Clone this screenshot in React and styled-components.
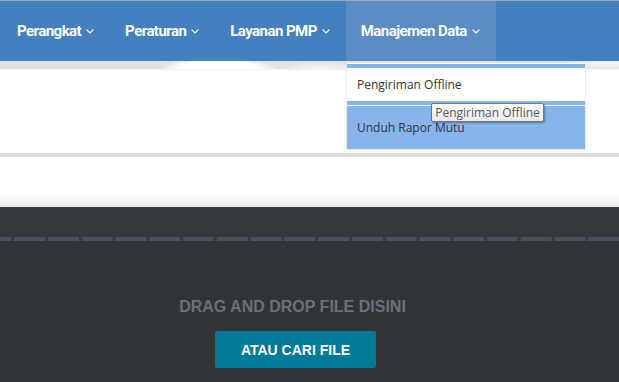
import React from "react";
import styled, { createGlobalStyle } from "styled-components";

const Global = createGlobalStyle`
  html, body { margin: 0; padding: 0; background: #fff; overflow: hidden; }
  body { font-family: "Open Sans", "Liberation Sans", sans-serif; }
`;

const Page = styled.div`
  width: 619px;
  height: 382px;
  display: flex;
  flex-direction: column;
  position: relative;
  overflow: hidden;
  border-top: 1px solid #a8a8a8;
  box-sizing: border-box;
`;

const Navbar = styled.nav`
  height: 60px;
  background: #4480c0;
  display: flex;
  padding-left: 2px;
  position: relative;
  flex-shrink: 0;
`;

const NavItem = styled.div`
  position: relative;
  display: flex;
  align-items: center;
  gap: 5px;
  padding: 0 16px 0 15px;
  height: 60px;
  color: #fff;
  font-family: Roboto, "Lato", sans-serif;
  font-weight: 700;
  font-size: 15px;
  letter-spacing: -0.55px;
  background: ${(p) => (p.$active ? "#5a8cc6" : "transparent")};
`;

const Chevron = () => (
  <svg width="8" height="5" viewBox="0 0 8 5" style={{ marginTop: 1 }}>
    <path d="M0.6 0.6 L4 4 L7.4 0.6" fill="none" stroke="#fff" strokeWidth="1.2" />
  </svg>
);

const Band = styled.div`
  height: 8px;
  flex-shrink: 0;
  background:
    radial-gradient(ellipse 65px 22px at 218px 16px, #fff 75%, rgba(255,255,255,0) 100%),
    radial-gradient(ellipse 45px 14px at 320px 14px, #f6f6f6 50%, rgba(255,255,255,0) 100%),
    radial-gradient(ellipse 40px 12px at 610px 0px, #f0f0f0 40%, rgba(255,255,255,0) 100%),
    #e2e2e2;
  border-bottom: 1px solid #f3f3f3;
`;

const Main = styled.div`
  height: 83px;
  flex-shrink: 0;
  background: #fff;
`;

const Divider = styled.div`
  height: 4px;
  flex-shrink: 0;
  background: #dedede;
`;

const Spacer = styled.div`
  height: 50px;
  flex-shrink: 0;
  background: linear-gradient(180deg, #fff 0, #fff 36px, #f4f4f4 44px, #e9e9e9 50px);
`;

const Dark = styled.section`
  flex: 1;
  background: #353a3e;
  display: flex;
  flex-direction: column;
`;

const DarkTop = styled.div`
  height: 30px;
  flex-shrink: 0;
`;

const Dashes = styled.div`
  height: 4px;
  flex-shrink: 0;
  background-image: linear-gradient(90deg, #4a5055 0, #4a5055 31.2px, transparent 31.2px);
  background-size: 33.77px 4px;
  background-repeat: repeat-x;
  background-position: 14.3px 0;
`;

const DropZone = styled.div`
  flex: 1;
  background: #303437;
  display: flex;
  flex-direction: column;
  align-items: center;
  padding: 57px 34px 0 0;
`;

const DropText = styled.div`
  font-family: "Liberation Sans", Arial, sans-serif;
  font-weight: 700;
  font-size: 16px;
  color: #6b7277;
  line-height: 18px;
`;

const BrowseButton = styled.button`
  margin-top: 15px;
  width: 161px;
  height: 37px;
  border: none;
  border-radius: 2px;
  background: #007a96;
  color: #fff;
  font-family: "Liberation Sans", Arial, sans-serif;
  font-weight: 700;
  font-size: 14px;
  padding: 0;
  margin-left: 6px;
`;

const Dropdown = styled.div`
  position: absolute;
  top: 62px;
  left: 346px;
  width: 238px;
  border: 1px solid #ececec;
  border-top: none;
  background: #fff;
  z-index: 5;
`;

const DropTopBar = styled.div`
  height: 4px;
  background: #85b4ea;
  border-top: 1px solid #fff;
`;

const DropItem = styled.div`
  height: ${(p) => p.$h}px;
  display: flex;
  align-items: center;
  padding-left: 10px;
  font-family: "Open Sans", sans-serif;
  font-size: 12px;
  color: ${(p) => (p.$hover ? "#2d3440" : "#333")};
  background: ${(p) => (p.$hover ? "#86b4eb" : "#fff")};
`;

const DropSep = styled.div`
  height: 4px;
  background: #86b4eb;
  border-bottom: 1px solid #f4f8fd;
`;

const Tooltip = styled.div`
  position: absolute;
  top: 102px;
  left: 431px;
  width: 113px;
  height: 19px;
  box-sizing: border-box;
  border: 1px solid #767676;
  border-radius: 2px;
  background: linear-gradient(180deg, #ffffff, #e9e9ef);
  box-shadow: 1px 1px 2px rgba(0,0,0,0.35);
  font-family: "Open Sans", sans-serif;
  font-size: 12px;
  color: #575757;
  display: flex;
  align-items: center;
  justify-content: center;
  z-index: 6;
  white-space: nowrap;
`;

const items = [
  { label: "Perangkat" },
  { label: "Peraturan" },
  { label: "Layanan PMP" },
  { label: "Manajemen Data", active: true },
];

export default function App() {
  return (
    <>
      <Global />
      <Page>
        <Navbar>
          {items.map((it) => (
            <NavItem key={it.label} $active={it.active}>
              {it.label}
              <Chevron />
            </NavItem>
          ))}
        </Navbar>
        <Band />
        <Main />
        <Divider />
        <Spacer />
        <Dark>
          <DarkTop />
          <Dashes />
          <DropZone>
            <DropText>DRAG AND DROP FILE DISINI</DropText>
            <BrowseButton>ATAU CARI FILE</BrowseButton>
          </DropZone>
        </Dark>
        <Dropdown>
          <DropTopBar />
          <DropItem $h={33}>Pengiriman Offline</DropItem>
          <DropSep />
          <DropItem $h={43} $hover>Unduh Rapor Mutu</DropItem>
        </Dropdown>
        <Tooltip>Pengiriman Offline</Tooltip>
      </Page>
    </>
  );
}
